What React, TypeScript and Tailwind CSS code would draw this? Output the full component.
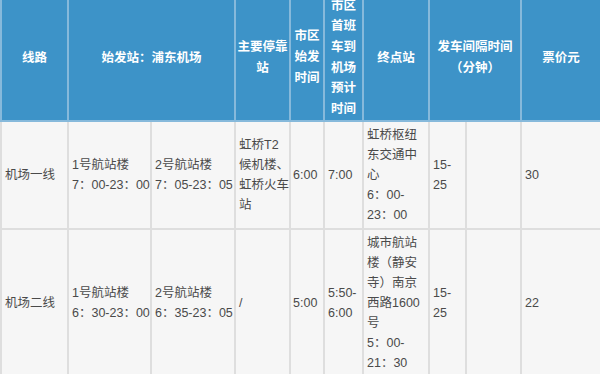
import React from 'react';

const font = { fontFamily: '"Liberation Sans", "Noto Sans CJK SC", sans-serif' };

const th = 'border-2 border-[#86b9db] bg-[#3d93c8] text-white font-bold text-center align-middle py-0';
const td = 'border-2 border-[#dedede] bg-[#f6f6f6] text-[#4a4a4a] text-left align-middle py-[3px]';

const rows = [
    {
        line: '机场一线',
        t1: ['1号航站楼', '7：00-23：00'],
        t2: ['2号航站楼', '7：05-23：05'],
        stops: '虹桥T2候机楼、虹桥火车站',
        depart: '6:00',
        arrive: '7:00',
        end: ['虹桥枢纽东交通中心', '6：00-23：00'],
        interval: '15-25',
        price: '30',
    },
    {
        line: '机场二线',
        t1: ['1号航站楼', '6：30-23：00'],
        t2: ['2号航站楼', '6：35-23：05'],
        stops: '/',
        depart: '5:00',
        arrive: '5:50-6:00',
        end: ['城市航站楼（静安寺）南京西路1600号', '5：00-21：30'],
        interval: '15-25',
        price: '22',
    },
];

export default function App() {
    return (
        <div className="w-[600px] h-[374px] overflow-hidden bg-white" style={font}>
            <table className="table-fixed border-collapse w-[600px] -mt-[7px] text-[12.5px] leading-[20px]">
                <colgroup>
                    <col className="w-[67px]" />
                    <col className="w-[83px]" />
                    <col className="w-[84px]" />
                    <col className="w-[55px]" />
                    <col className="w-[34px]" />
                    <col className="w-[39px]" />
                    <col className="w-[66px]" />
                    <col className="w-[37px]" />
                    <col className="w-[55px]" />
                    <col className="w-[80px]" />
                </colgroup>
                <thead>
                    <tr className="h-[127px]">
                        <th className={`${th} px-[3px]`}>线路</th>
                        <th className={`${th} px-[3px]`} colSpan={2}>始发站：浦东机场</th>
                        <th className={`${th} px-0 leading-[21px]`}>主要停靠<br />站</th>
                        <th className={`${th} px-[3px] leading-[21px]`}>市区始发时间</th>
                        <th className={`${th} px-[3px] leading-[20.6px]`}>市区首班车到机场预计时间</th>
                        <th className={`${th} px-[3px]`}>终点站</th>
                        <th className={`${th} px-[3px] leading-[21px]`} colSpan={2}>发车间隔时间<br />（分钟）</th>
                        <th className={`${th} px-[3px]`}>票价元</th>
                    </tr>
                </thead>
                <tbody>
                    {rows.map(r => (
                        <tr key={r.line}>
                            <td className={`${td} px-[3px]`}>{r.line}</td>
                            <td className={`${td} px-[3px] whitespace-nowrap`}>{r.t1[0]}<br />{r.t1[1]}</td>
                            <td className={`${td} px-[3px] whitespace-nowrap`}>{r.t2[0]}<br />{r.t2[1]}</td>
                            <td className={`${td} pl-[3px] pr-0`}>{r.stops}</td>
                            <td className={`${td} pl-[2px] pr-0`}>{r.depart}</td>
                            <td className={`${td} px-[3px]`}>{r.arrive}</td>
                            <td className={`${td} px-[3px]`}>{r.end[0]}<br />{r.end[1]}</td>
                            <td className={`${td} px-[3px]`}>{r.interval}</td>
                            <td className={`${td} px-[3px]`}></td>
                            <td className={`${td} px-[3px]`}>{r.price}</td>
                        </tr>
                    ))}
                </tbody>
            </table>
        </div>
    );
}
